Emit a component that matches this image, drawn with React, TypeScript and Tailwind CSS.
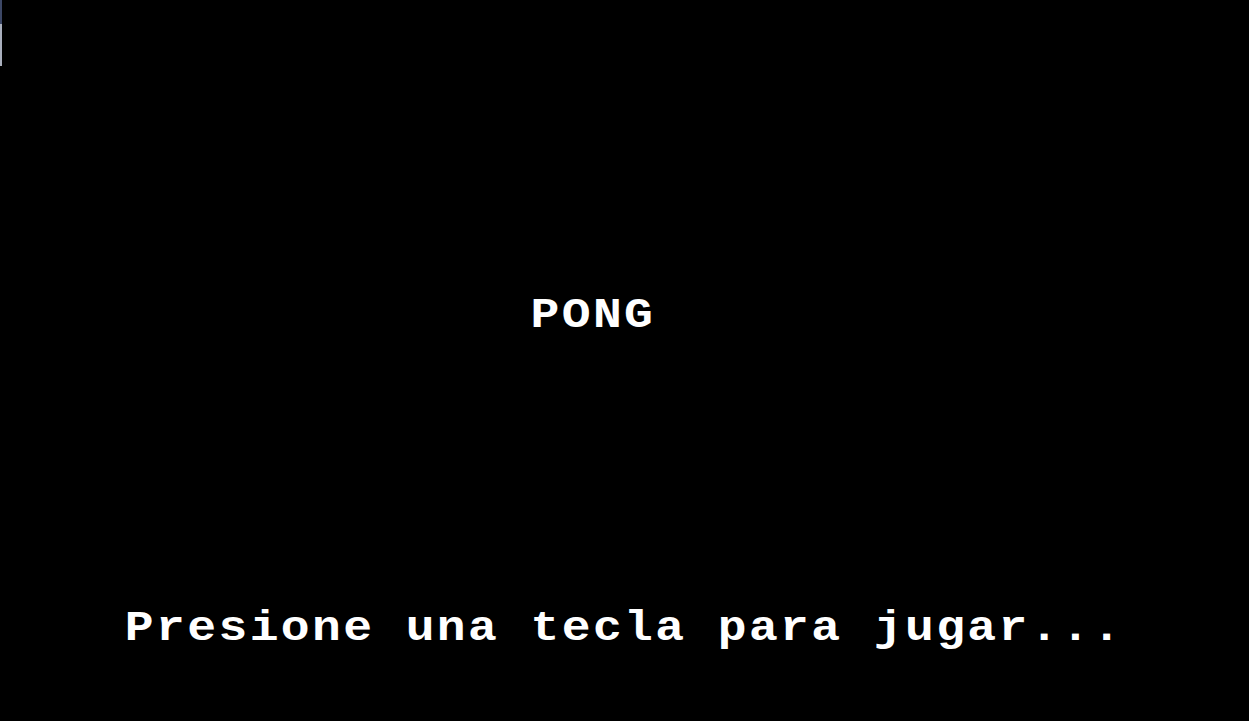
import React from "react";

// pantalla de inicio tipo consola de 40 columnas
const lines = [
  { text: "                 PONG", top: "pt-[292px]" },
  { text: "    Presione una tecla para jugar...", top: "pt-[265px]" },
];

const App: React.FC = () => (
  <div className="relative w-full h-[721px] bg-black overflow-hidden">
    {/* borde de la ventana a la izquierda */}
    <div className="absolute left-0 top-0 w-[2px] h-[24px] bg-[#3c4766]" />
    <div className="absolute left-0 top-[24px] w-[2px] h-[42px] bg-[#a9afbd]" />
    <div className="flex flex-col">
      {lines.map((l) => (
        <div key={l.text} className={l.top}>
          <div className="whitespace-pre text-white font-bold text-[48px] leading-[48px] tracking-[2.4px] scale-y-[0.87] [font-family:'Liberation_Mono',monospace]">
            {l.text}
          </div>
        </div>
      ))}
    </div>
  </div>
);

export default App;
